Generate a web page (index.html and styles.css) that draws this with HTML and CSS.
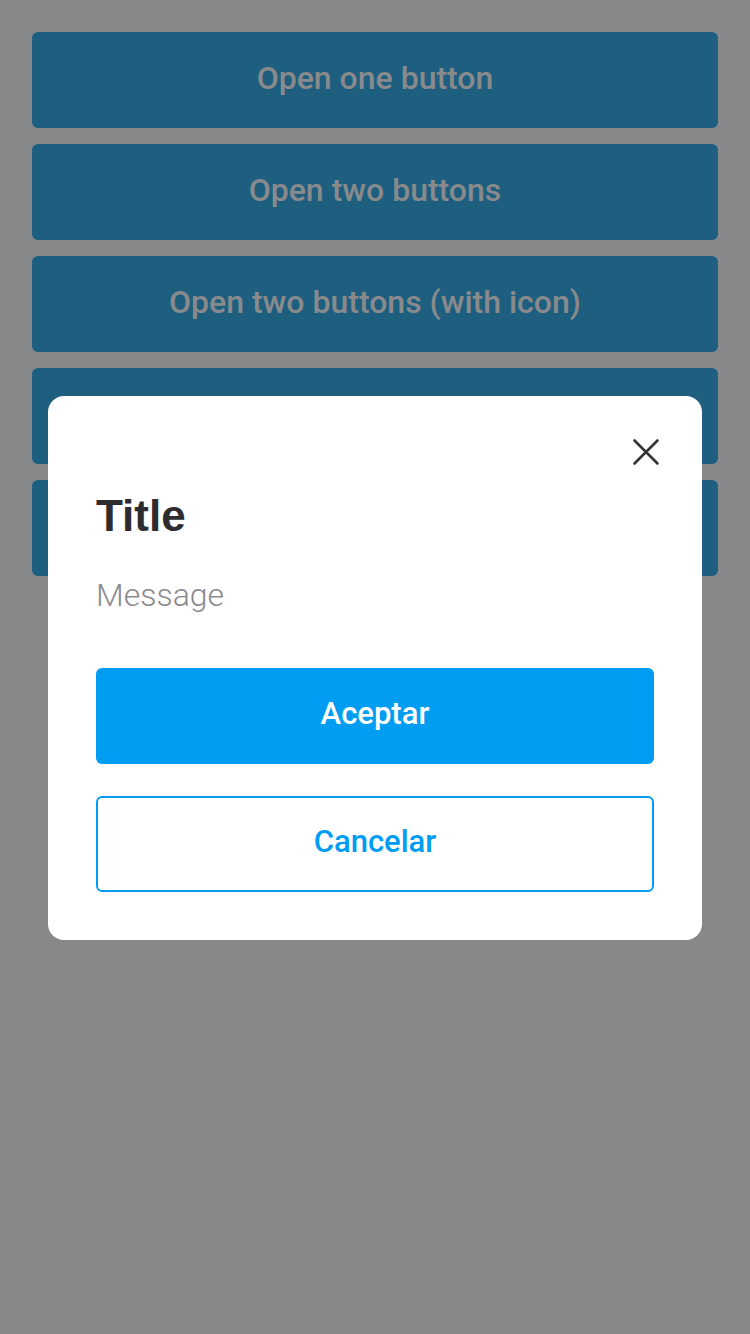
FILE: index.html
```html
<!DOCTYPE html>
<html lang="en">
<head>
<meta charset="utf-8">
<title>Dialog</title>
<link rel="stylesheet" href="styles.css">
</head>
<body>
<main class="page">
  <button class="demo-btn">Open one button</button>
  <button class="demo-btn">Open two buttons</button>
  <button class="demo-btn">Open two buttons (with icon)</button>
  <button class="demo-btn">Open custom</button>
  <button class="demo-btn">Open other</button>
</main>
<div class="modal">
  <div class="modal-head">
    <button class="close" aria-label="Close">
      <svg width="32" height="32" viewBox="0 0 32 32"><path d="M4.5 4.5 L27.5 27.5 M27.5 4.5 L4.5 27.5" stroke="#333336" stroke-width="2.6" stroke-linecap="round" fill="none"/></svg>
    </button>
  </div>
  <h1 class="title">Title</h1>
  <p class="message">Message</p>
  <div class="actions">
    <button class="btn btn-primary">Aceptar</button>
    <button class="btn btn-outline">Cancelar</button>
  </div>
</div>
</body>
</html>
```
FILE: styles.css
```css
html, body {
  margin: 0;
  padding: 0;
}
body {
  width: 750px;
  height: 1334px;
  background: #87888a;
  font-family: Roboto, "Liberation Sans", sans-serif;
  position: relative;
  overflow: hidden;
}
.page {
  display: flex;
  flex-direction: column;
  gap: 16px;
  padding: 32px;
}
.demo-btn {
  height: 96px;
  border: 0;
  border-radius: 6px;
  background: #1e5f80;
  color: #898a8c;
  font-family: Roboto, "Liberation Sans", sans-serif;
  font-size: 32px;
  font-weight: 500;
  padding: 0 0 5px;
}
.modal {
  position: absolute;
  left: 48px;
  top: 396px;
  width: 654px;
  height: 544px;
  box-sizing: border-box;
  background: #fff;
  border-radius: 16px;
  padding: 40px 48px 48px;
  display: flex;
  flex-direction: column;
}
.modal-head {
  display: flex;
  justify-content: flex-end;
  height: 32px;
}
.close {
  width: 32px;
  height: 32px;
  padding: 0;
  margin-right: -8px;
  border: 0;
  background: none;
  display: flex;
}
.title {
  margin: 20px 0 0;
  font-family: "Liberation Sans", Arial, sans-serif;
  font-size: 44px;
  line-height: 56px;
  font-weight: 700;
  color: #2d2d30;
}
.message {
  margin: 31px 0 0;
  font-size: 32px;
  line-height: 40px;
  font-weight: 300;
  color: #8a8a8d;
}
.actions {
  margin-top: 53px;
  display: flex;
  flex-direction: column;
  gap: 32px;
}
.btn {
  height: 96px;
  border-radius: 6px;
  font-family: Roboto, "Liberation Sans", sans-serif;
  font-size: 31px;
  font-weight: 500;
  padding: 0 0 5px;
}
.btn-primary {
  background: #009df3;
  color: #fff;
  border: 0;
}
.btn-outline {
  background: #fff;
  color: #009df3;
  border: 2px solid #009df3;
}
```
